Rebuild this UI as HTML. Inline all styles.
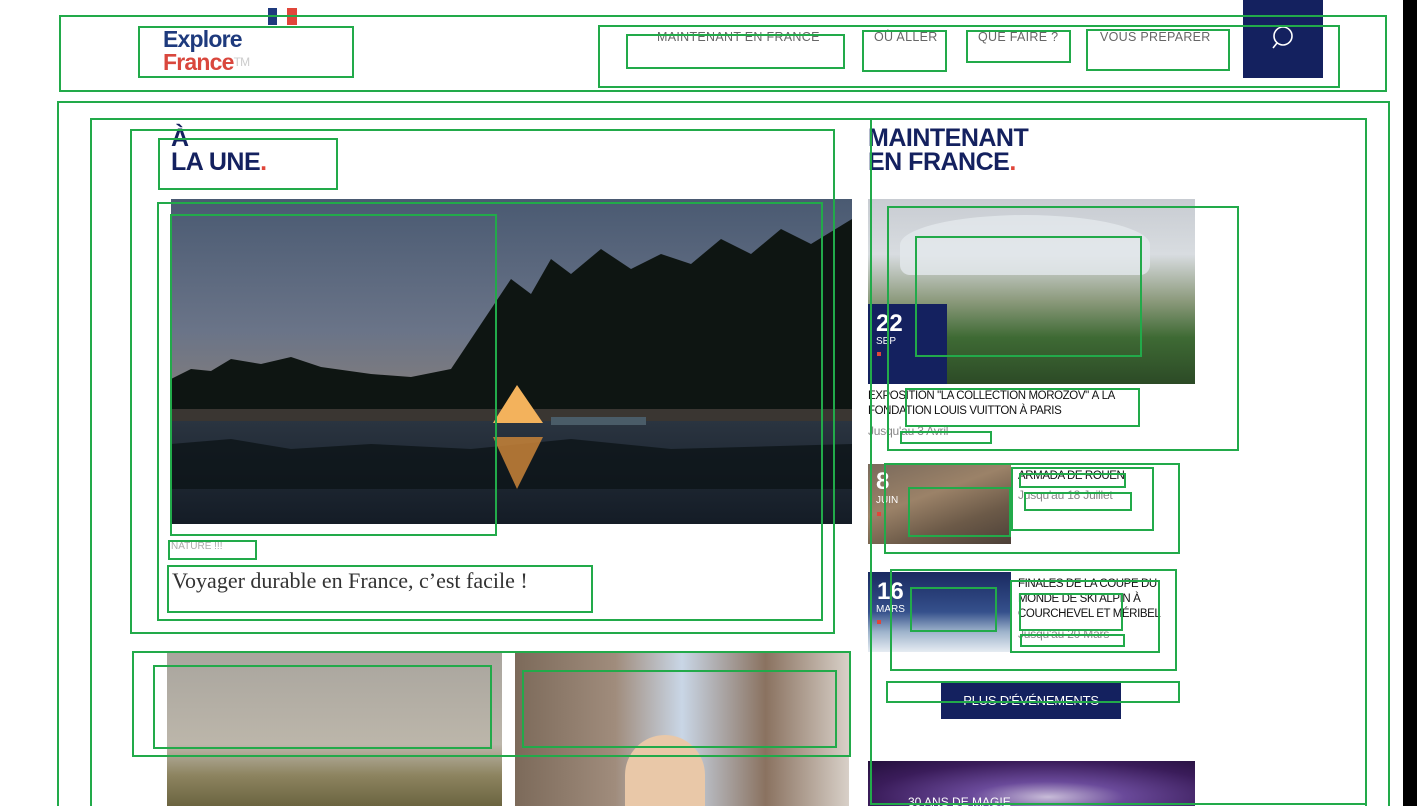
<!DOCTYPE html>
<html><head><meta charset="utf-8"><style>
*{margin:0;padding:0;box-sizing:border-box}
html,body{width:1417px;height:806px;overflow:hidden;background:#fff}
body{font-family:"Liberation Sans",sans-serif}
#w{position:relative;width:1417px;height:806px;overflow:hidden}
.a{position:absolute}
.g{position:absolute;border:2px solid #22aa4a}
.nav{position:absolute;top:30px;font-size:12.5px;color:#666;letter-spacing:.3px}
.t{position:absolute;font-size:11.5px;color:#111;line-height:15px;letter-spacing:-.4px}
.s{position:absolute;font-size:12px;color:#888;letter-spacing:-.2px}
.d{position:absolute;color:#fff;font-weight:bold;font-size:24px;line-height:24px}
.m{position:absolute;color:#fff;font-size:10px}
.r{position:absolute;width:4px;height:4px;background:#e0463a}
h2{position:absolute;font-size:25px;line-height:25px;color:#14215f;font-weight:900;letter-spacing:-.5px}
h2 i{color:#e0463a;font-style:normal}
</style></head><body><div id="w">
<!-- header -->
<div class="a" style="left:268px;top:8px;width:9px;height:17px;background:#1e3a7d"></div>
<div class="a" style="left:287px;top:8px;width:10px;height:17px;background:#e0463a"></div>
<div class="a" style="left:163px;top:27px;font-size:23px;line-height:24px;color:#1e3a7d;font-weight:bold;letter-spacing:-.8px">Explore</div>
<div class="a" style="left:163px;top:50px;font-size:23px;line-height:24px;color:#d9473d;font-weight:bold;letter-spacing:-.8px">France<span style="color:#ccc;font-size:12px;font-weight:normal;vertical-align:top">TM</span></div>
<div class="nav" style="left:657px">MAINTENANT EN FRANCE</div>
<div class="nav" style="left:874px">OÙ ALLER</div>
<div class="nav" style="left:978px">QUE FAIRE ?</div>
<div class="nav" style="left:1100px">VOUS PREPARER</div>
<div class="a" style="left:1243px;top:0;width:80px;height:78px;background:#14215f"></div>
<svg class="a" style="left:1268px;top:24px" width="28" height="28" viewBox="0 0 28 28"><circle cx="15" cy="12" r="9" fill="none" stroke="#fff" stroke-width="1.6"/><line x1="9" y1="19" x2="5" y2="24" stroke="#fff" stroke-width="1.6"/></svg>
<div class="a" style="left:1403px;top:0;width:14px;height:806px;background:#000"></div>
<!-- left column -->
<h2 style="left:171px;top:126px">À</h2>
<h2 style="left:171px;top:150px">LA UNE<i>.</i></h2>
<svg class="a" style="left:171px;top:199px" width="681" height="325" viewBox="0 0 681 325">
<defs><linearGradient id="sk" x1="0" y1="0" x2="0" y2="1"><stop offset="0" stop-color="#4a5a72"/><stop offset=".6" stop-color="#6a7488"/><stop offset="1" stop-color="#8a8078"/></linearGradient>
<linearGradient id="wt" x1="0" y1="0" x2="0" y2="1"><stop offset="0" stop-color="#2a3440"/><stop offset="1" stop-color="#141c26"/></linearGradient></defs>
<rect width="681" height="220" fill="url(#sk)"/>
<path d="M0 180 L20 170 40 172 60 160 90 165 120 158 150 168 200 175 240 178 280 170 320 110 340 80 360 95 380 60 400 75 430 50 460 70 490 55 520 65 550 40 580 55 610 30 640 45 681 20 L681 215 L0 215Z" fill="#0e1512"/>
<rect y="210" width="681" height="12" fill="#3a3632"/>
<rect y="222" width="681" height="103" fill="url(#wt)"/>
<path d="M0 245 L60 240 120 250 200 245 300 250 400 240 500 250 681 245 L681 290 L0 290Z" fill="#0c1418" opacity=".8"/>
<path d="M322 224 L346 186 L372 224Z" fill="#f3b25c"/>
<path d="M322 238 L346 290 L372 238Z" fill="#c98438" opacity=".85"/>
<rect x="380" y="218" width="95" height="8" fill="#4a5c68"/>
</svg>
<div class="a" style="left:171px;top:541px;font-size:10px;color:#aaa">NATURE !!!</div>
<div class="a" style="left:172px;top:568px;font-size:22px;color:#333;font-family:'Liberation Serif',serif">Voyager durable en France, c’est facile !</div>
<div class="a" style="left:167px;top:652px;width:335px;height:154px;background:linear-gradient(180deg,#a9a59e 0%,#bcb6aa 60%,#8d8460 80%,#6b6440 100%)"></div>
<div class="a" style="left:515px;top:652px;width:334px;height:154px;background:linear-gradient(90deg,#7c6a5a 0%,#a08c7c 30%,#c9d6e6 50%,#8a7260 75%,#d8d0c8 100%)"></div>
<div class="a" style="left:625px;top:735px;width:80px;height:71px;border-radius:40px 40px 0 0;background:#e9c8a8"></div>
<!-- right column -->
<h2 style="left:868px;top:126px">MAINTENANT</h2>
<h2 style="left:868px;top:150px">EN FRANCE<i>.</i></h2>
<div class="a" style="left:868px;top:199px;width:327px;height:185px;background:linear-gradient(180deg,#c8ccd2 0%,#d8dce0 30%,#8c9a7c 55%,#3e6a34 75%,#2c4a26 100%)"></div>
<div class="a" style="left:900px;top:215px;width:250px;height:60px;border-radius:50% 50% 10px 10px;background:#e4e8ec;opacity:.8"></div>
<div class="a" style="left:868px;top:304px;width:79px;height:80px;background:#14215f"></div>
<div class="d" style="left:876px;top:312px">22</div><div class="m" style="left:876px;top:336px">SEP</div><div class="r" style="left:877px;top:352px"></div>
<div class="t" style="left:868px;top:389px">EXPOSITION "LA COLLECTION MOROZOV" À LA<br>FONDATION LOUIS VUITTON À PARIS</div>
<div class="s" style="left:868px;top:424px">Jusqu'au 3 Avril</div>
<div class="a" style="left:868px;top:464px;width:143px;height:80px;background:linear-gradient(160deg,#7a6a5c 0%,#9b8268 40%,#6c5a48 70%,#4c4038 100%)"></div>
<div class="d" style="left:876px;top:470px">8</div><div class="m" style="left:876px;top:495px">JUIN</div><div class="r" style="left:877px;top:512px"></div>
<div class="t" style="left:1018px;top:469px">ARMADA DE ROUEN</div>
<div class="s" style="left:1018px;top:488px">Jusqu'au 18 Juillet</div>
<div class="a" style="left:868px;top:572px;width:143px;height:80px;background:linear-gradient(180deg,#1a2a60 0%,#35508c 50%,#9fb4cc 75%,#e6ecf2 100%)"></div>
<div class="d" style="left:877px;top:580px">16</div><div class="m" style="left:876px;top:604px">MARS</div><div class="r" style="left:877px;top:620px"></div>
<div class="t" style="left:1018px;top:577px">FINALES DE LA COUPE DU<br>MONDE DE SKI ALPIN À<br>COURCHEVEL ET MÉRIBEL</div>
<div class="s" style="left:1018px;top:627px">Jusqu'au 20 Mars</div>
<div class="a" style="left:941px;top:683px;width:180px;height:36px;background:#14215f;color:#fff;font-size:13px;text-align:center;line-height:36px;letter-spacing:-.2px">PLUS D'ÉVÉNEMENTS</div>
<div class="a" style="left:868px;top:761px;width:327px;height:45px;background:radial-gradient(ellipse at 55% 80%,#c8bcd8 0%,#6a4a9a 30%,#3a1c5a 70%,#24103c 100%)"></div>
<div class="a" style="left:908px;top:795px;color:#fff;font-size:12px">30 ANS DE MAGIE</div>
<!-- debug boxes -->
<div class="g" style="left:59px;top:15px;width:1328px;height:77px"></div>
<div class="g" style="left:138px;top:26px;width:216px;height:52px"></div>
<div class="g" style="left:598px;top:25px;width:742px;height:63px"></div>
<div class="g" style="left:626px;top:34px;width:219px;height:35px"></div>
<div class="g" style="left:862px;top:30px;width:85px;height:42px"></div>
<div class="g" style="left:966px;top:30px;width:105px;height:33px"></div>
<div class="g" style="left:1086px;top:29px;width:144px;height:42px"></div>
<div class="g" style="left:57px;top:101px;width:1333px;height:720px"></div>
<div class="g" style="left:90px;top:118px;width:1277px;height:720px"></div>
<div class="g" style="left:870px;top:118px;width:497px;height:687px"></div>
<div class="g" style="left:130px;top:129px;width:705px;height:505px"></div>
<div class="g" style="left:158px;top:138px;width:180px;height:52px"></div>
<div class="g" style="left:157px;top:202px;width:666px;height:419px"></div>
<div class="g" style="left:170px;top:214px;width:327px;height:322px"></div>
<div class="g" style="left:168px;top:540px;width:89px;height:20px"></div>
<div class="g" style="left:167px;top:565px;width:426px;height:48px"></div>
<div class="g" style="left:132px;top:651px;width:719px;height:106px"></div>
<div class="g" style="left:153px;top:665px;width:339px;height:84px"></div>
<div class="g" style="left:522px;top:670px;width:315px;height:78px"></div>
<div class="g" style="left:887px;top:206px;width:352px;height:245px"></div>
<div class="g" style="left:915px;top:236px;width:227px;height:121px"></div>
<div class="g" style="left:905px;top:388px;width:235px;height:39px"></div>
<div class="g" style="left:900px;top:431px;width:92px;height:13px"></div>
<div class="g" style="left:884px;top:463px;width:296px;height:91px"></div>
<div class="g" style="left:908px;top:487px;width:103px;height:50px"></div>
<div class="g" style="left:1011px;top:467px;width:143px;height:64px"></div>
<div class="g" style="left:1019px;top:473px;width:107px;height:15px"></div>
<div class="g" style="left:1024px;top:492px;width:108px;height:19px"></div>
<div class="g" style="left:890px;top:569px;width:287px;height:102px"></div>
<div class="g" style="left:910px;top:587px;width:87px;height:45px"></div>
<div class="g" style="left:1010px;top:580px;width:150px;height:73px"></div>
<div class="g" style="left:1019px;top:593px;width:104px;height:38px"></div>
<div class="g" style="left:1020px;top:634px;width:105px;height:13px"></div>
<div class="g" style="left:886px;top:681px;width:294px;height:22px"></div>
</div></body></html>
